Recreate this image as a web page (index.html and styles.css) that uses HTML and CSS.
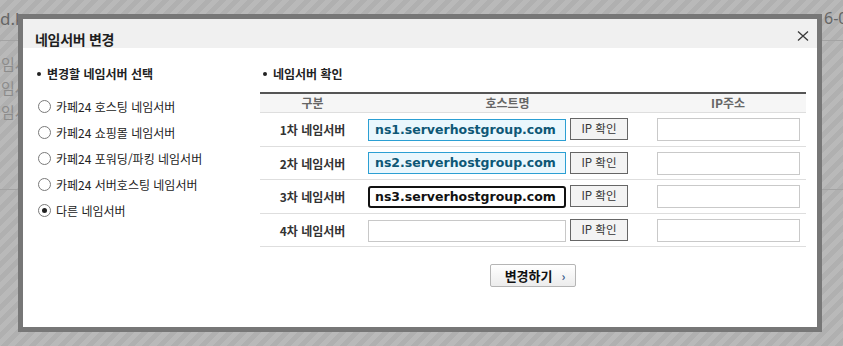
FILE: index.html
```html
<!DOCTYPE html>
<html lang="ko">
<head>
<meta charset="utf-8">
<title>네임서버 변경</title>
<link rel="stylesheet" href="styles.css">
</head>
<body>
<div class="bgpage">
  <div class="bg-head"><span class="bg-left">d.kr</span><span class="bg-right">6-0</span></div>
  <div class="bg-rows">
    <div class="bg-row">임서버</div>
    <div class="bg-row">임서버</div>
    <div class="bg-row">임서버</div>
  </div>
</div>

<div class="modal">
  <div class="modal-head">
    <h1 class="modal-title">네임서버 변경</h1>
    <button class="close" type="button" aria-label="닫기">
      <svg width="12" height="12" viewBox="0 0 12 12"><path d="M1 1.5 L11 10.5 M11 1.5 L1 10.5" stroke="#3a3a3a" stroke-width="1.3" fill="none"/></svg>
    </button>
  </div>
  <div class="modal-body">
    <div class="col-left">
      <h2 class="sec-title"><span class="dot"></span>변경할 네임서버 선택</h2>
      <ul class="radios">
        <li><span class="radio"></span>카페24 호스팅 네임서버</li>
        <li><span class="radio"></span>카페24 쇼핑몰 네임서버</li>
        <li><span class="radio"></span>카페24 포워딩/파킹 네임서버</li>
        <li><span class="radio"></span>카페24 서버호스팅 네임서버</li>
        <li><span class="radio on"></span>다른 네임서버</li>
      </ul>
    </div>
    <div class="col-right">
      <h2 class="sec-title"><span class="dot"></span>네임서버 확인</h2>
      <div class="ns-table">
        <div class="ns-row ns-head">
          <div>구분</div><div>호스트명</div><div>IP주소</div>
        </div>
        <div class="ns-row">
          <div class="label">1차 네임서버</div>
          <div class="host"><span class="inp filled">ns1.serverhostgroup.com</span><span class="ipbtn">IP 확인</span></div>
          <div class="ipcell"><span class="ipinp"></span></div>
        </div>
        <div class="ns-row">
          <div class="label">2차 네임서버</div>
          <div class="host"><span class="inp filled">ns2.serverhostgroup.com</span><span class="ipbtn">IP 확인</span></div>
          <div class="ipcell"><span class="ipinp"></span></div>
        </div>
        <div class="ns-row">
          <div class="label">3차 네임서버</div>
          <div class="host"><span class="inp focus">ns3.serverhostgroup.com</span><span class="ipbtn">IP 확인</span></div>
          <div class="ipcell"><span class="ipinp"></span></div>
        </div>
        <div class="ns-row">
          <div class="label">4차 네임서버</div>
          <div class="host"><span class="inp"></span><span class="ipbtn">IP 확인</span></div>
          <div class="ipcell"><span class="ipinp"></span></div>
        </div>
      </div>
      <div class="actions">
        <button class="submit" type="button">변경하기<span class="arr">›</span></button>
      </div>
    </div>
  </div>
</div>
</body>
</html>
```
FILE: styles.css
```css
* { box-sizing: border-box; }
html, body { margin: 0; padding: 0; }
body {
  width: 843px;
  height: 346px;
  overflow: hidden;
  position: relative;
  font-family: "Noto Sans CJK KR", "Noto Sans", sans-serif;
  background: repeating-linear-gradient(135deg, #b9b9b9 0px, #b9b9b9 5px, #b0b0b0 5px, #b0b0b0 10px);
}

/* page behind the overlay */
.bgpage { width: 843px; }
.bg-head {
  height: 41px;
  border-bottom: 1px solid #a3a3a3;
  display: grid;
  grid-template-columns: 824px 1fr;
  align-items: center;
  font-family: "Noto Sans", sans-serif;
  font-size: 17px;
  color: #666;
  white-space: nowrap;
  overflow: hidden;
}
.bg-left { margin-left: 0; padding-bottom: 4px; }
.bg-right { font-size: 16px; padding-bottom: 4px; }
.bg-rows {
  padding-top: 11px;
  height: 149px;
  border-bottom: 1px solid #a3a3a3;
}
.bg-row {
  height: 24px;
  line-height: 24px;
  font-size: 15px;
  color: #8c8c8c;
  white-space: nowrap;
  padding-left: 1px;
}

/* modal */
.modal {
  position: absolute;
  left: 18px;
  top: 14px;
  width: 804px;
  height: 318px;
  border: 5px solid #777;
  background: #fff;
}
.modal-head {
  height: 29px;
  background: #f0f0f0;
  display: flex;
  justify-content: space-between;
  align-items: flex-start;
  padding: 10px 8px 0 12px;
}
.modal-title {
  margin: 0;
  font-size: 14px;
  font-weight: 700;
  line-height: 20px;
  color: #1e1e1e;
  letter-spacing: -0.3px;
}
.close {
  border: 0;
  background: none;
  padding: 0;
  margin-top: 1px;
  width: 12px;
  height: 12px;
  display: block;
}
.close svg { display: block; }

.modal-body {
  display: grid;
  grid-template-columns: 237px 546px;
}
.sec-title {
  margin: 17px 0 0;
  font-size: 12px;
  font-weight: 700;
  line-height: 18px;
  color: #222;
  display: flex;
  align-items: center;
}
.dot {
  width: 4px;
  height: 4px;
  border-radius: 50%;
  background: #222;
  margin-right: 6px;
}
.col-left { padding-left: 14px; }
.radios {
  list-style: none;
  margin: 11px 0 0;
  padding: 0 0 0 1px;
}
.radios li {
  height: 25.8px;
  display: flex;
  align-items: center;
  font-size: 12px;
  color: #222;
  white-space: nowrap;
}
.radio {
  width: 13px;
  height: 13px;
  border: 1px solid #7a7a7a;
  border-radius: 50%;
  background: #fff;
  margin-right: 5px;
  display: flex;
  align-items: center;
  justify-content: center;
}
.radio.on::after {
  content: "";
  width: 5px;
  height: 5px;
  border-radius: 50%;
  background: #222;
}

.col-right .sec-title { padding-left: 3px; }
.ns-table {
  margin-top: 9px;
  border-top: 2px solid #555;
}
.ns-row {
  display: grid;
  grid-template-columns: 105px 285px 156px;
  height: 33.6px;
  border-bottom: 1px solid #dedede;
  align-items: center;
}
.ns-head {
  height: 19px;
  background: #f6f6f6;
  font-size: 12px;
  font-weight: 700;
  color: #666;
  text-align: center;
  line-height: 18px;
}
.label {
  text-align: center;
  font-size: 12px;
  font-weight: 700;
  color: #333;
  padding-top: 1px;
}
.host {
  display: flex;
  align-items: center;
  gap: 4px;
  padding-left: 3px;
}
.inp {
  width: 198px;
  height: 22px;
  border: 1px solid #c8c8c8;
  background: #fff;
  font-family: "DejaVu Sans", sans-serif;
  font-weight: 700;
  font-size: 12.5px;
  line-height: 20px;
  padding-left: 6px;
  white-space: nowrap;
  overflow: hidden;
  margin-top: 1px;
}
.inp.filled {
  border-color: #2b9fd3;
  background: #eaf7fd;
  color: #0e5776;
}
.inp.focus {
  border: 2px solid #111;
  border-radius: 3px;
  color: #111;
  padding-left: 5px;
  line-height: 18px;
}
.ipbtn {
  width: 58px;
  height: 22px;
  border: 1px solid #666;
  background: #f3f3f3;
  font-size: 11.5px;
  line-height: 19px;
  text-align: center;
  color: #333;
}
.ipcell { padding-left: 7px; }
.ipinp {
  display: block;
  width: 143px;
  height: 23px;
  border: 1px solid #c9c9c9;
  background: #fff;
  margin-top: 1px;
}

.actions {
  display: flex;
  justify-content: center;
  margin-top: 17px;
}
.submit {
  width: 86px;
  height: 23px;
  border: 1px solid #b5b5b5;
  border-radius: 2px;
  background: linear-gradient(#ffffff, #ececec);
  font-family: "Noto Sans CJK KR", sans-serif;
  font-size: 13px;
  font-weight: 700;
  color: #111;
  padding: 0 0 0 4px;
  display: flex;
  align-items: center;
  justify-content: center;
  line-height: 20px;
}
.arr {
  margin-left: 9px;
  font-size: 12px;
  color: #3b5b8c;
  font-weight: 700;
}
```
